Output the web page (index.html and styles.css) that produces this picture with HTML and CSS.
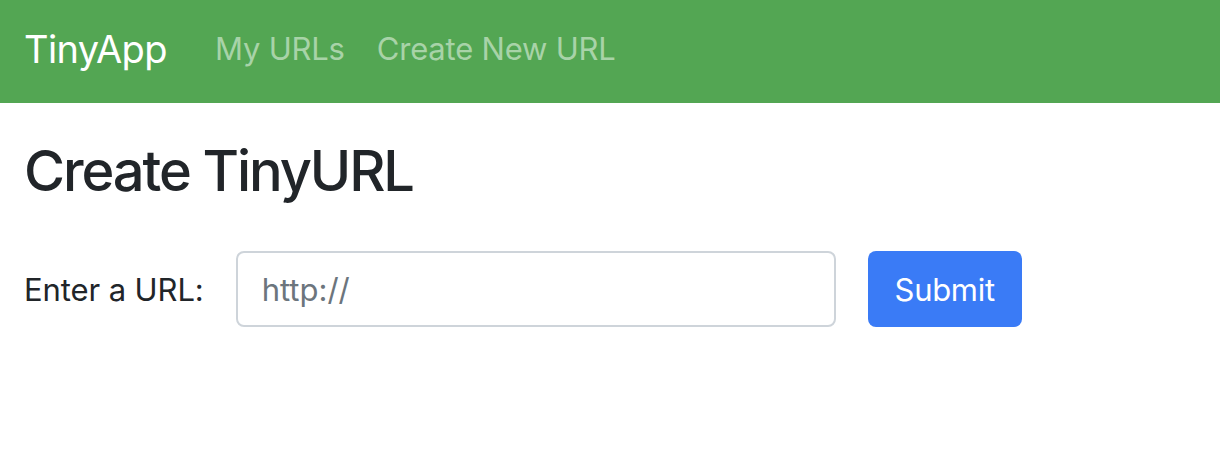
FILE: index.html
```html
<!DOCTYPE html>
<html lang="en">
<head>
<meta charset="utf-8">
<title>TinyApp</title>
<link rel="stylesheet" href="styles.css">
</head>
<body>
<nav class="navbar">
  <a class="brand" href="#">TinyApp</a>
  <div class="nav-links">
    <a class="nav-link" href="#">My URLs</a>
    <a class="nav-link" href="#">Create New URL</a>
  </div>
</nav>
<main class="content">
  <h1 class="title">Create TinyURL</h1>
  <form class="url-form">
    <label class="label" for="longURL">Enter a URL:</label>
    <input class="input" id="longURL" type="text" placeholder="http://">
    <button class="btn" type="button">Submit</button>
  </form>
</main>
</body>
</html>
```
FILE: styles.css
```css
* { box-sizing: border-box; }
body {
  margin: 0;
  font-family: Inter, "Noto Sans", "Liberation Sans", sans-serif;
  color: #212529;
  background: #fff;
}
.navbar {
  height: 103px;
  background: #53a653;
  display: flex;
  align-items: center;
  padding: 0 24px 6px;
}
.brand {
  color: #fff;
  text-decoration: none;
  font-size: 38px;
  margin-right: 48px;
  letter-spacing: -0.6px;
}
.nav-links {
  display: flex;
  gap: 32px;
}
.nav-link {
  color: #a8d3a8;
  text-decoration: none;
  font-size: 31px;
  letter-spacing: -0.2px;
}
.content {
  padding: 0 24px;
}
.title {
  margin: 35px 0 0;
  font-size: 56px;
  font-weight: 500;
  line-height: 1.2;
  letter-spacing: -2.1px;
}
.url-form {
  margin-top: 46px;
  display: flex;
  align-items: center;
}
.label {
  font-size: 31px;
  letter-spacing: -0.1px;
  margin-right: 32px;
}
.input {
  width: 600px;
  height: 76px;
  border: 2px solid #ced4da;
  border-radius: 8px;
  padding: 0 24px;
  font-family: inherit;
  font-size: 31px;
  color: #212529;
  outline: none;
  margin-right: 32px;
}
.input::placeholder { color: #6c757d; }
.btn {
  height: 76px;
  width: 154px;
  border: none;
  border-radius: 8px;
  background: #3a7bf6;
  color: #fff;
  font-family: inherit;
  font-size: 31px;
  letter-spacing: -0.3px;
}
```
